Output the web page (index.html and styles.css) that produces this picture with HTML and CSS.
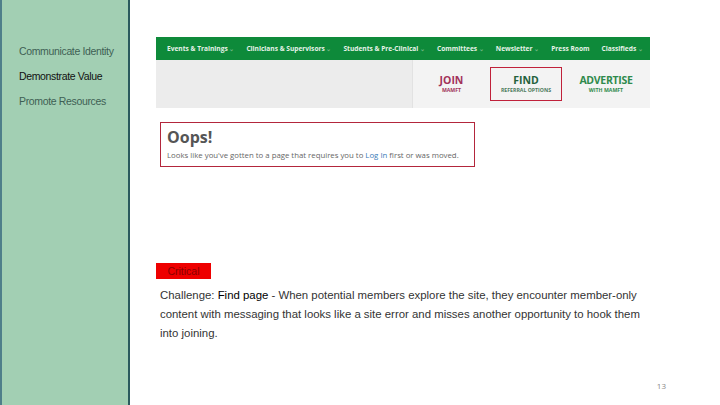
FILE: index.html
```html
<!DOCTYPE html>
<html lang="en">
<head>
    <meta charset="UTF-8">
    <title>Demonstrate Value - Find page</title>
    <link rel="stylesheet" href="styles.css">
</head>
<body>
    <div class="slide">
        <div class="sidebar">
            <ul class="outline">
                <li>Communicate Identity</li>
                <li class="current">Demonstrate Value</li>
                <li>Promote Resources</li>
            </ul>
        </div>

        <div class="main">
            <div class="shot">
                <div class="topnav">
                    <span class="nav-item">Events &amp; Trainings <i>&#8964;</i></span>
                    <span class="nav-item">Clinicians &amp; Supervisors <i>&#8964;</i></span>
                    <span class="nav-item">Students &amp; Pre-Clinical <i>&#8964;</i></span>
                    <span class="nav-item">Committees <i>&#8964;</i></span>
                    <span class="nav-item">Newsletter <i>&#8964;</i></span>
                    <span class="nav-item">Press Room</span>
                    <span class="nav-item">Classifieds <i>&#8964;</i></span>
                </div>
                <div class="band">
                    <div class="band-fill"></div>
                    <div class="actions">
                        <div class="action join">
                            <b>JOIN</b>
                            <small>MAMFT</small>
                        </div>
                        <div class="action find">
                            <b>FIND</b>
                            <small>REFERRAL OPTIONS</small>
                        </div>
                        <div class="action advertise">
                            <b>ADVERTISE</b>
                            <small>WITH MAMFT</small>
                        </div>
                    </div>
                </div>
            </div>

            <div class="oops">
                <h2>Oops!</h2>
                <p>Looks like you've gotten to a page that requires you to <a href="#">Log In</a> first or was moved.</p>
            </div>

            <div class="finding">
                <div class="tag">Critical</div>
                <p>Challenge: <strong>Find page</strong> - When potential members explore the site, they encounter member-only content with messaging that looks like a site error and misses another opportunity to hook them into joining.</p>
            </div>

            <div class="page-num">13</div>
        </div>
    </div>
</body>
</html>
```

FILE: styles.css
```css
body {
    margin: 0;
    background: #fff;
    font-family: "Liberation Sans", Arial, sans-serif;
}
.slide {
    display: flex;
    width: 720px;
    height: 405px;
    overflow: hidden;
}
.sidebar {
    width: 126px;
    flex-shrink: 0;
    background-color: #a2cfb3;
    border-left: 2px solid #4f7f8a;
    border-right: 2px solid #2b5a5e;
}
.outline {
    list-style: none;
    margin: 0;
    padding: 44px 0 0 17px;
}
.outline li {
    font-size: 10.5px;
    letter-spacing: -0.35px;
    color: #3e5f54;
    height: 25px;
    line-height: 14px;
}
.outline li.current {
    color: #111;
}
.main {
    flex: 1;
    display: flex;
    flex-direction: column;
    padding: 37px 0 0 26px;
}
.shot {
    width: 494px;
}
.topnav {
    height: 23px;
    background-color: #0e8a3a;
    display: flex;
    align-items: center;
    padding-left: 11px;
    font-family: "Open Sans", sans-serif;
    font-weight: bold;
    font-size: 6.6px;
    color: #e6f2e8;
}
.nav-item {
    margin-right: 12px;
    white-space: nowrap;
}
.nav-item i {
    font-style: normal;
    color: #6fb884;
    font-size: 6px;
}
.band {
    height: 48px;
    display: flex;
    background-color: #ececec;
}
.band-fill {
    flex: 1;
}
.actions {
    width: 237px;
    display: flex;
    align-items: center;
    background-color: #f3f3f3;
    border-left: 1px solid #e2e2e2;
}
.action {
    display: flex;
    flex-direction: column;
    align-items: center;
    font-family: "Open Sans", sans-serif;
}
.action b {
    font-size: 10.5px;
    line-height: 12px;
}
.action small {
    font-size: 5.2px;
    font-weight: bold;
    line-height: 8px;
}
.join {
    width: 77px;
    color: #a2325a;
}
.find {
    width: 70px;
    height: 32px;
    justify-content: center;
    border: 1px solid #c0213a;
    color: #24613c;
}
.find small {
    color: #4b7a5c;
}
.advertise {
    flex: 1;
    color: #2f8a4c;
}
.advertise b {
    letter-spacing: -0.3px;
}
.oops {
    width: 301px;
    margin: 14px 0 0 4px;
    border: 1.5px solid #b3263c;
    padding: 2px 6px 5px;
    font-family: "Open Sans", sans-serif;
}
.oops h2 {
    margin: 0;
    font-size: 16px;
    line-height: 24px;
    color: #555;
}
.oops p {
    margin: 0;
    font-size: 7.8px;
    line-height: 12px;
    color: #666;
}
.oops a {
    color: #3a7cb8;
    text-decoration: none;
}
.finding {
    margin-top: 96px;
}
.tag {
    width: 55px;
    text-align: center;
    background-color: #ee0000;
    color: #8a0000;
    font-size: 10.5px;
    line-height: 16px;
}
.finding p {
    margin: 7px 0 0 4px;
    width: 482px;
    font-size: 11.4px;
    line-height: 19px;
    color: #333;
}
.finding strong {
    font-weight: normal;
    color: #000;
}
.page-num {
    margin-top: auto;
    margin-bottom: 14px;
    width: 510px;
    text-align: right;
    font-family: "Open Sans", sans-serif;
    font-size: 8px;
    color: #888;
}
```
